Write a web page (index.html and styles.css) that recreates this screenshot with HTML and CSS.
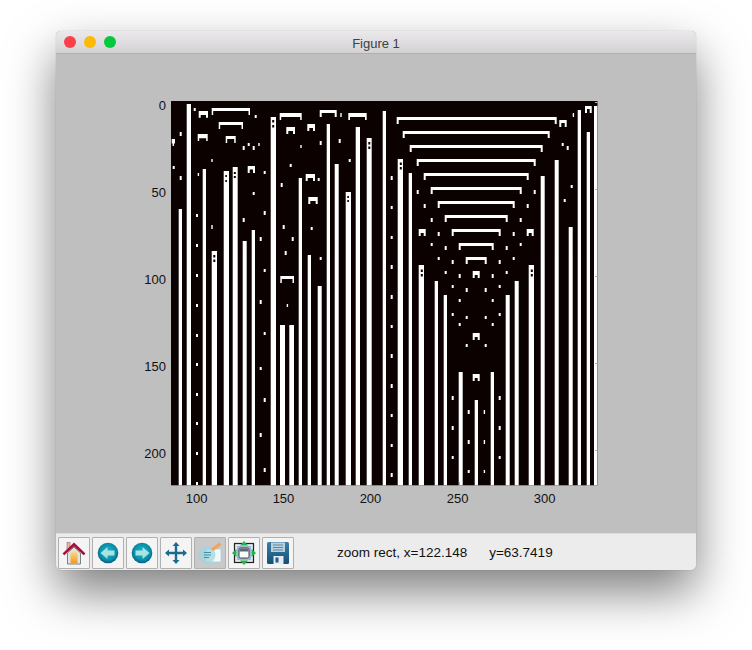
FILE: index.html
```html
<!DOCTYPE html>
<html lang="en">
<head>
<meta charset="utf-8">
<title>Figure 1</title>
<link rel="stylesheet" href="styles.css">
</head>
<body>
<div class="window">
  <header class="titlebar">
    <div class="lights">
      <span class="light red"></span>
      <span class="light yellow"></span>
      <span class="light green"></span>
    </div>
    <div class="title">Figure 1</div>
  </header>
  <svg class="figure" viewBox="56 54 640 479" width="640" height="479">
    <rect class="plot-bg" x="171" y="101" width="426.5" height="384.3"/>
    <path class="ink" d="
M186.7 104h4.3V485.3h-4.3z M178.7 209h3.3V485.3h-3.3z M202.7 169h3.3V485.3h-3.3z M211.7 251h5.3V485.3h-5.3z
M223.7 171h5.3V485.3h-5.3z M232.7 167h5V485.3h-5z M242.7 241h4V485.3h-4z M251.7 230h3.3V485.3h-3.3z
M270.7 117h5.3V485.3h-5.3z M280 325h5V485.3h-5z M289.3 325h4.7V485.3h-4.7z M298.7 178h3.3V485.3h-3.3z
M307.7 255h3.3V485.3h-3.3z M317.7 286h4V485.3h-4z M326.7 124h3.3V485.3h-3.3z M334.7 164h4V485.3h-4z
M345.7 192h5.3V485.3h-5.3z M355.7 127h4.3V485.3h-4.3z M366.7 138h5V485.3h-5z M382.7 111h3.3V485.3h-3.3z
M397.7 159h5.3V485.3h-5.3z M408.7 173h3.3V485.3h-3.3z M418.7 265h5.3V485.3h-5.3z M434.7 281h3.3V485.3h-3.3z
M443.7 295h3.3V485.3h-3.3z M458.7 372h4V485.3h-4z M474.7 400h3.3V485.3h-3.3z M490.7 372h3.3V485.3h-3.3z
M505.7 295h4V485.3h-4z M514.7 281h4V485.3h-4z M528.7 265h5.3V485.3h-5.3z M540.7 176h4V485.3h-4z
M554.7 160h4V485.3h-4z M568.7 227h4V485.3h-4z M577.7 110h3.3V485.3h-3.3z M586.7 132h3.3V485.3h-3.3z
M594 106h3.3V485.3h-3.3z
M396.7 117h160v7h-2v-4h-156v4h-2z M402.7 131h147v7h-2v-4h-143v4h-2z M409.7 145h133v7h-2v-4h-129v4h-2z
M416.7 159h119v7h-2v-4h-115v4h-2z M423.7 173h105v7h-2v-4h-101v4h-2z M430.7 187h91v7h-2v-4h-87v4h-2z
M437.7 201h77v7h-2v-4h-73v4h-2z M444.7 215h63v7h-2v-4h-59v4h-2z M451.7 229h49v7h-2v-4h-45v4h-2z
M458.7 243h35v7h-2v-4h-31v4h-2z M465.7 257h21v7h-2v-4h-17v4h-2z
M472.7 271h7v7h-2v-3h-3v3h-2z M472.7 333h7v7h-2v-3h-3v3h-2z M472.7 374h7v7h-2v-3h-3v3h-2z
M418.7 229h7v7h-2v-3h-3v3h-2z M526.7 229h7v7h-2v-3h-3v3h-2z
M559.3 120h7.4v7h-2v-4h-3.4v4h-2z M585 106h6.7v7h-2v-4h-2.7v4h-2z
M198.7 111h9.3v6.7h-2v-2.7h-5.3v2.7h-2z M211.7 108h38.3v7h-1.5v-4h-35.3v4h-1.5z M218.7 122h24.3v7h-1.5v-4h-21.3v4h-1.5z
M197.7 134h10v7h-1.5v-2.7h-7v2.7h-1.5z M225.7 136h10v7h-1.5v-4h-7v4h-1.5z M247.7 166h7.3v7h-2v-3.5h-3.3v3.5h-2z
M279.7 113h22v7h-1.5v-3h-19v3h-1.5z M286.3 127h8.7v7h-2v-3h-4.7v3h-2z M307.3 124h7.7v7h-2v-3h-3.7v3h-2z
M319.7 110h17v7h-2v-4h-13v4h-2z M348.3 113h18.4v7h-1.7v-3h-15v3h-1.7z M305.7 174h9.3v7h-2v-3h-5.3v3h-2z
M308.3 197h9.4v7h-2v-3h-5.4v3h-2z M280.3 276h13.7v7h-1.5v-4h-10.7v4h-1.5z
M171.7 139h3.3v4.5h-1v2.5h-1.4v-2.5h-.9z
M193.7 108h2v3h-2z M254.7 115h2v3h-2z M179.7 132h2v4h-2z M242.7 146h2v4h-2z M247.7 143h2v3h-2z M252.7 146h2v4h-2z
M258.3 143h1.4v3h-1.4z M211.3 159h1.4v3h-1.4z M172.7 166h2v3h-2z M179.7 176h2v4h-2z M197.7 173h1.4v3h-1.4z
M263.7 171h2v3h-2z M252.7 192h2v3h-2z M340.3 113h1.4v4h-1.4z M319.7 141h2v4h-2z M300.3 145h1.4v3h-1.4z
M338.7 139h2v4h-2z M289.7 164h2v3h-2z M348.7 159h2v3h-2z M280.7 183h2v4h-2z M317.7 178h2v3h-2z
M390.7 176h2v4h-2z M416.7 190h2v4h-2z M572.7 113h1.4v4h-1.4z M561.7 143h2v3h-2z M566.7 146h2v4h-2z
M570.7 185h2v3h-2z M533.7 190h2v4h-2z
M196 214h2v3h-2z M196 244h2v3h-2z M196 274h2v3h-2z M196 304h2v3h-2z M196 334h2v3h-2z
M196 363h2v3h-2z M196 393h2v3h-2z M196 422h2v3h-2z M196 452h2v3h-2z M196 482h2v3h-2z
M390.7 206h2v3h-2z M390.7 236h2v3h-2z M390.7 265h2v4h-2z M390.7 295h2v4h-2z M390.7 325h2v3h-2z
M390.7 354h2v4h-2z M390.7 384h2v4h-2z M390.7 414h2v3h-2z M390.7 444h2v3h-2z M390.7 473h2v4h-2z
M423.7 204h2v4h-2z M526.7 204h2v4h-2z M563.7 199h2v3h-2z M430.7 218h2v4h-2z M519.7 218h2v4h-2z
M437.7 232h2v4h-2z M512.7 232h2v4h-2z M430.7 243h2v3h-2z M519.7 243h2v3h-2z M444.7 246h2v4h-2z M505.7 246h2v4h-2z
M437.7 257h2v3h-2z M512.7 257h2v3h-2z M451.7 260h2v4h-2z M498.7 260h2v4h-2z M444.7 271h2v3h-2z M505.7 271h2v3h-2z
M458.7 274h2v4h-2z M491.7 274h2v4h-2z M451.7 285h2v3h-2z M498.7 285h2v3h-2z M465.7 288h2v4h-2z M484.7 288h2v4h-2z
M458.7 299h2v3h-2z M491.7 299h2v3h-2z M451.7 313h2v3h-2z M498.7 313h2v3h-2z M465.7 316h2v3h-2z M484.7 316h2v3h-2z
M458.7 323h2v3h-2z M491.7 323h2v3h-2z M465.7 344h2v3h-2z M484.7 344h2v3h-2z
M451.7 396h2v4h-2z M498.7 396h2v4h-2z M467.7 410h2v4h-2z M483.7 410h1.4v4h-1.4z
M451.7 426h2v4h-2z M498.7 426h2v4h-2z M467.7 440h2v4h-2z M483.7 440h1.4v4h-1.4z
M451.7 456h2v3h-2z M498.7 456h2v3h-2z M467.7 470h2v3h-2z M483.7 470h1.4v3h-1.4z
M211.3 225h1.4v4h-1.4z M242.7 218h2v4h-2z M263.7 211h2v4h-2z M259.7 237h2v4h-2z M282.7 225h2v4h-2z M291.7 237h2v4h-2z
M284.7 251h2v4h-2z M310.7 227h2v3h-2z M319.7 257h2v3h-2z M263.7 269h2v3h-2z M259.7 300h2v4h-2z M286.7 304h1.4v3h-1.4z
M263.7 332h2v3h-2z M259.7 367h2v3h-2z M263.7 398h2v4h-2z M259.7 433h2v4h-2z M263.7 468h2v4h-2z"/>
    <path class="holes" d="
M213.3 255h2v2.4h-2z M213.3 259.5h2v2.4h-2z M225.3 175h1.6v2h-1.6z M225.3 180h1.6v2h-1.6z
M233.8 172h2v2h-2z M233.8 176h2v2h-2z M272.2 120h2v2.4h-2z M272.2 125h2v2.4h-2z
M347.3 196h1.6v2h-1.6z M347.3 200h1.6v2h-1.6z M368.3 142h2v2.4h-2z M368.3 146.5h2v2.4h-2z
M399.8 162.5h2v2.4h-2z M399.8 167h2v2.4h-2z M420.8 269.5h2v2.4h-2z M420.8 274h2v2.4h-2z
M530.8 269.5h2v2.4h-2z M530.8 274h2v2.4h-2z"/>
    <path class="ticks" d="M595 102h2.4v1H595z M595 189h2.4v1H595z M595 276h2.4v1H595z M595 363h2.4v1H595z M595 450h2.4v1H595z M459 482h1v3h-1z"/>
    <g class="ylabels">
      <text x="166" y="110">0</text>
      <text x="166" y="197">50</text>
      <text x="166" y="284">100</text>
      <text x="166" y="371">150</text>
      <text x="166" y="458">200</text>
    </g>
    <g class="xlabels">
      <text x="196.7" y="503">100</text>
      <text x="283.5" y="503">150</text>
      <text x="370.5" y="503">200</text>
      <text x="457.7" y="503">250</text>
      <text x="544.7" y="503">300</text>
    </g>
  </svg>
  <footer class="toolbar">
    <div class="tools">
      <button class="tool" aria-label="Home">
        <svg viewBox="0 0 24 24" width="24" height="24">
          <defs>
            <linearGradient id="door" x1="0" y1="0" x2="0" y2="1"><stop offset="0" stop-color="#ffdc8a"/><stop offset="1" stop-color="#f29a26"/></linearGradient>
            <radialGradient id="orb" cx=".5" cy=".45" r=".55"><stop offset="0" stop-color="#19bccb"/><stop offset=".7" stop-color="#0a90aa"/><stop offset="1" stop-color="#04607f"/></radialGradient>
            <linearGradient id="disk" x1="0" y1="0" x2="0" y2="1"><stop offset="0" stop-color="#3a7fa8"/><stop offset="1" stop-color="#164f78"/></linearGradient>
          </defs>
          <rect x="5" y="1.500" width="3" height="7" fill="#e6b9a6" stroke="#a4686a" stroke-width=".6"/>
          <path d="M5.500 12 12 6l6.500 6v11h-13z" fill="#dfe4e4" stroke="#6f8484"/>
          <path d="M8.500 22v-9q0-3 3.500-3t3.500 3v9z" fill="url(#door)"/>
          <path d="M.5 12.500 12 1.500l11.500 11-1.800 1.800L12 5.500l-9.700 8.800z" fill="#a8123a"/>
        </svg>
      </button>
      <button class="tool" aria-label="Back">
        <svg viewBox="0 0 24 24" width="24" height="24">
          <circle cx="12" cy="12" r="10.300" fill="url(#orb)"/>
          <path d="M4.500 12 11.500 6v3.600H18.500v4.800H11.500V18z" fill="#a9e3e4"/>
        </svg>
      </button>
      <button class="tool" aria-label="Forward">
        <svg viewBox="0 0 24 24" width="24" height="24">
          <circle cx="12" cy="12" r="10.300" fill="url(#orb)"/>
          <path d="M19.500 12 12.500 6v3.600H5.500v4.800h7V18z" fill="#a9e3e4"/>
        </svg>
      </button>
      <button class="tool" aria-label="Pan">
        <svg viewBox="0 0 24 24" width="24" height="24">
          <path d="M12 1l3.500 4h-2.300v5.800H19V8.500l4 3.500-4 3.500v-2.300h-5.800V19h2.300L12 23l-3.500-4h2.300v-5.800H5v2.300L1 12l4-3.500v2.300h5.800V5H8.500z" fill="#1b6a90"/>
        </svg>
      </button>
      <button class="tool active" aria-label="Zoom">
        <svg viewBox="0 0 24 24" width="24" height="24">
          <rect x="8" y="8" width="15" height="13" fill="#f2f9fb" stroke="#9fd4df" stroke-width=".8"/>
          <circle cx="9" cy="14" r="8.500" fill="#9ed5de" fill-opacity=".75"/>
          <path d="M6 11.500h7M6 14h7M6 16.500h5" stroke="#3f8fa8" stroke-width="1.200" fill="none"/>
          <path d="M14 9 22.500 2.500" stroke="#f0a45c" stroke-width="3.200" fill="none"/>
        </svg>
      </button>
      <button class="tool" aria-label="Configure subplots">
        <svg viewBox="0 0 24 24" width="24" height="24">
          <rect x="2.500" y="2.500" width="19" height="19" fill="#dfe6ee" stroke="#222" stroke-width="1.200"/>
          <rect x="5" y="5" width="14" height="14" fill="#9db8d8"/>
          <rect x="7" y="7" width="10" height="10" rx="1.500" fill="#fafafa" stroke="#333" stroke-width=".9"/>
          <path d="M7.500 7.500h9v3h-9z" fill="#5a6878"/>
          <path d="M12 0l4 4.500H8zM12 24l4-4.500H8zM0 12l4.500-4v8zM24 12l-4.500-4v8z" fill="#1fb54a"/>
        </svg>
      </button>
      <button class="tool" aria-label="Save">
        <svg viewBox="0 0 24 24" width="24" height="24">
          <path d="M1 2.500Q1 1 2.500 1h19Q23 1 23 2.500v19Q23 23 21.500 23h-19Q1 23 1 21.500z" fill="url(#disk)"/>
          <path d="M5 1.500h14v9.500H5z" fill="#b9d0de"/>
          <path d="M7 4h10M7 6.500h10M7 9h10" stroke="#5f8aa5" stroke-width="1" fill="none"/>
          <path d="M7.500 15h10v8h-10z" fill="#e4ecf1"/>
          <path d="M9.500 16.500h3v5h-3z" fill="#1d5c85"/>
        </svg>
      </button>
    </div>
    <div class="status"><span>zoom rect, x=122.148</span><span>y=63.7419</span></div>
  </footer>
</div>
</body>
</html>
```
FILE: styles.css
```css
html, body {
  margin: 0;
  background: #fff;
}
body {
  width: 752px;
  height: 650px;
  overflow: hidden;
  padding: 31px 0 0 56px;
  box-sizing: border-box;
  font-family: "Liberation Sans", Arial, sans-serif;
}
.window {
  width: 640px;
  height: 539px;
  display: flex;
  flex-direction: column;
  border-radius: 5px;
  overflow: hidden;
  background: #bfbfbf;
  box-shadow: 0 0 1px rgba(0,0,0,.35), 0 22px 48px rgba(0,0,0,.5);
}
.titlebar {
  height: 23px;
  flex: none;
  box-sizing: border-box;
  display: flex;
  align-items: center;
  position: relative;
  padding-left: 8px;
  background: linear-gradient(#ebe9eb, #d3d1d3);
  border-bottom: 1px solid #b1b0b1;
}
.lights {
  display: flex;
  gap: 8px;
}
.light {
  width: 12px;
  height: 12px;
  border-radius: 50%;
}
.red { background: #fc3f48; }
.yellow { background: #fdb908; }
.green { background: #04c93f; }
.title {
  position: absolute;
  inset: 0;
  text-align: center;
  font-size: 13px;
  line-height: 25px;
  color: #404040;
}
.figure {
  display: block;
  flex: none;
  background: #bfbfbf;
}
.plot-bg { fill: #0b0101; }
.ink { fill: #fff; }
.holes { fill: #0b0101; }
.ticks { fill: #b4b4b4; }
.ylabels text, .xlabels text {
  font-family: "Liberation Sans", Arial, sans-serif;
  font-size: 13px;
  fill: #111;
}
.ylabels text { text-anchor: end; }
.xlabels text { text-anchor: middle; }
.toolbar {
  flex: 1;
  display: flex;
  align-items: flex-start;
  box-sizing: border-box;
  padding: 3px 0 0 2px;
  background: #ececec;
  border-top: 1px solid #dcdcdc;
}
.tools {
  display: flex;
  gap: 2px;
}
.tool {
  width: 32px;
  height: 32px;
  margin: 0;
  padding: 0;
  box-sizing: border-box;
  display: flex;
  align-items: center;
  justify-content: center;
  background: #f4f4f4;
  border: 1px solid #b0b0b0;
  border-radius: 1px;
}
.tool.active { background: #c9c9c9; }
.status {
  display: flex;
  gap: 22px;
  margin-left: 43px;
  font-size: 13.5px;
  line-height: 32px;
  color: #111;
}
```
